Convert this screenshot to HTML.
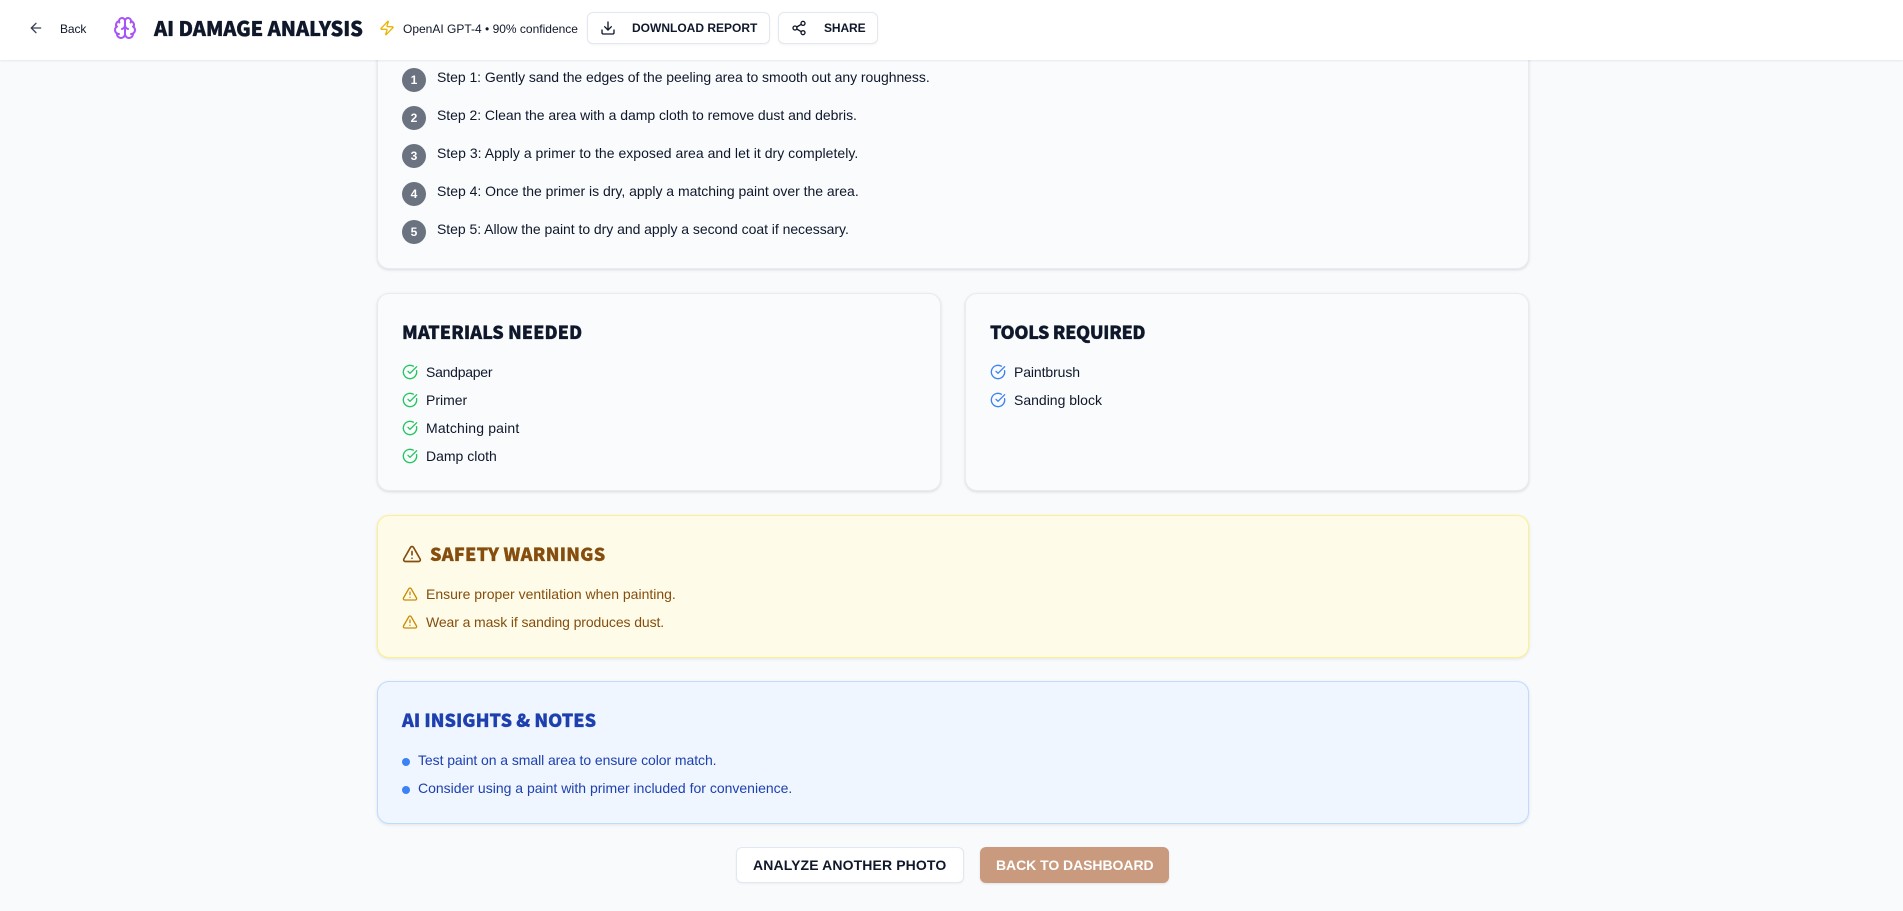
<!DOCTYPE html>
<html><head><meta charset="utf-8">
<style>
html,body{margin:0;padding:0;width:1903px;height:911px;overflow:hidden;background:#f8fafc;}
body{position:relative;font-family:"Liberation Sans","Noto Sans CJK JP",sans-serif;color:#0f172a;font-size:14px;}
.a{position:absolute;}
.t{position:absolute;white-space:nowrap;line-height:20px;height:20px;font-size:14px;}
.h{position:absolute;white-space:nowrap;line-height:24px;height:24px;font-size:18px;font-weight:900;font-family:"Noto Sans CJK JP","Liberation Sans",sans-serif;-webkit-text-stroke:.35px currentColor;}
.card{position:absolute;box-sizing:border-box;border:1px solid #e8ecf2;border-radius:12px;background:#f9fbfd;box-shadow:0 1px 3px rgba(15,23,42,.1),0 1px 2px rgba(15,23,42,.04);}
.hdr{position:absolute;left:0;top:0;width:1903px;height:60px;background:#fff;box-shadow:0 1px 2px rgba(15,23,42,.08);z-index:5;}
.btn{position:absolute;box-sizing:border-box;border:1px solid #e2e8f0;border-radius:6px;background:#fff;box-shadow:0 1px 2px rgba(15,23,42,.05);}
.b{font-weight:700;}
svg{position:absolute;fill:none;stroke-linecap:round;stroke-linejoin:round;stroke-width:2;}
.num{position:absolute;left:402px;width:24px;height:24px;border-radius:50%;background:#6b7280;color:#fff;font-weight:700;font-size:12px;line-height:24px;text-align:center;}
.dot{position:absolute;left:402px;width:8px;height:8px;border-radius:50%;background:#3b82f6;}
</style></head><body>
<svg width="0" height="0" style="position:absolute"><defs>
<symbol id="check" viewBox="0 0 24 24"><path d="M21.801 10A10 10 0 1 1 17 3.335"/><path d="m9 11 3 3L22 4"/></symbol>
<symbol id="warn" viewBox="0 0 24 24"><path d="m21.73 18-8-14a2 2 0 0 0-3.48 0l-8 14A2 2 0 0 0 4 21h16a2 2 0 0 0 1.73-3"/><path d="M12 9v4"/><path d="M12 17h.01"/></symbol>
</defs></svg>

<div class="card" style="left:377px;top:20px;width:1152px;height:249px;"></div>
<div class="num" style="top:68px;">1</div>
<div class="t" style="left:437px;top:67px;letter-spacing:-.05px;">Step 1: Gently sand the edges of the peeling area to smooth out any roughness.</div>
<div class="num" style="top:106px;">2</div>
<div class="t" style="left:437px;top:105px;letter-spacing:-.04px;">Step 2: Clean the area with a damp cloth to remove dust and debris.</div>
<div class="num" style="top:144px;">3</div>
<div class="t" style="left:437px;top:143px;letter-spacing:.03px;">Step 3: Apply a primer to the exposed area and let it dry completely.</div>
<div class="num" style="top:182px;">4</div>
<div class="t" style="left:437px;top:181px;letter-spacing:-.02px;">Step 4: Once the primer is dry, apply a matching paint over the area.</div>
<div class="num" style="top:220px;">5</div>
<div class="t" style="left:437px;top:219px;letter-spacing:-.04px;">Step 5: Allow the paint to dry and apply a second coat if necessary.</div>

<div class="card" style="left:377px;top:293px;width:564px;height:198px;"></div>
<div class="h" style="left:402px;top:320px;letter-spacing:.03px;">MATERIALS NEEDED</div>
<svg style="left:402px;top:364px;stroke:#22c55e" width="16" height="16"><use href="#check"/></svg>
<div class="t" style="left:426px;top:362px;letter-spacing:-.25px;">Sandpaper</div>
<svg style="left:402px;top:392px;stroke:#22c55e" width="16" height="16"><use href="#check"/></svg>
<div class="t" style="left:426px;top:390px;">Primer</div>
<svg style="left:402px;top:420px;stroke:#22c55e" width="16" height="16"><use href="#check"/></svg>
<div class="t" style="left:426px;top:418px;letter-spacing:.17px;">Matching paint</div>
<svg style="left:402px;top:448px;stroke:#22c55e" width="16" height="16"><use href="#check"/></svg>
<div class="t" style="left:426px;top:446px;">Damp cloth</div>

<div class="card" style="left:965px;top:293px;width:564px;height:198px;"></div>
<div class="h" style="left:990px;top:320px;letter-spacing:-.38px;">TOOLS REQUIRED</div>
<svg style="left:990px;top:364px;stroke:#3b82f6" width="16" height="16"><use href="#check"/></svg>
<div class="t" style="left:1014px;top:362px;letter-spacing:-.1px;">Paintbrush</div>
<svg style="left:990px;top:392px;stroke:#3b82f6" width="16" height="16"><use href="#check"/></svg>
<div class="t" style="left:1014px;top:390px;">Sanding block</div>

<div class="card" style="left:377px;top:515px;width:1152px;height:143px;background:#fefce8;border-color:#fef08a;box-shadow:0 1px 3px rgba(15,23,42,.1);"></div>
<svg style="left:402px;top:544px;stroke:#854d0e" width="20" height="20"><use href="#warn"/></svg>
<div class="h" style="left:430px;top:542px;color:#854d0e;letter-spacing:.25px;">SAFETY WARNINGS</div>
<svg style="left:402px;top:586px;stroke:#ca8a04" width="16" height="16"><use href="#warn"/></svg>
<div class="t" style="left:426px;top:584px;color:#854d0e;">Ensure proper ventilation when painting.</div>
<svg style="left:402px;top:614px;stroke:#ca8a04" width="16" height="16"><use href="#warn"/></svg>
<div class="t" style="left:426px;top:612px;color:#854d0e;letter-spacing:-.1px;">Wear a mask if sanding produces dust.</div>

<div class="card" style="left:377px;top:681px;width:1152px;height:143px;background:#eff6ff;border-color:#bfdbfe;box-shadow:0 1px 3px rgba(15,23,42,.1);"></div>
<div class="h" style="left:402px;top:708px;color:#1e40af;letter-spacing:.03px;">AI INSIGHTS &amp; NOTES</div>
<div class="dot" style="top:758px;"></div>
<div class="t" style="left:418px;top:750px;color:#1e40af;letter-spacing:-.07px;">Test paint on a small area to ensure color match.</div>
<div class="dot" style="top:786px;"></div>
<div class="t" style="left:418px;top:778px;color:#1e40af;">Consider using a paint with primer included for convenience.</div>

<div class="btn" style="left:736px;top:847px;width:228px;height:36px;"></div>
<div class="t b" style="left:753px;top:855px;letter-spacing:.12px;">ANALYZE ANOTHER PHOTO</div>
<div class="a" style="left:980px;top:847px;width:189px;height:36px;background:#c99a7e;border-radius:6px;box-shadow:0 1px 2px rgba(15,23,42,.1);"></div>
<div class="t b" style="left:996px;top:855px;color:#fff;letter-spacing:-.05px;">BACK TO DASHBOARD</div>

<div class="hdr">
<svg style="left:28px;top:20px;stroke:#374151" width="16" height="16" viewBox="0 0 24 24"><path d="m12 19-7-7 7-7"/><path d="M19 12H5"/></svg>
<div class="t" style="left:60px;top:18.5px;font-size:12px;letter-spacing:-.1px;">Back</div>
<svg style="left:113px;top:16px;stroke:#a855f7" width="24" height="24" viewBox="0 0 24 24"><path d="M12 5a3 3 0 1 0-5.997.125 4 4 0 0 0-2.526 5.77 4 4 0 0 0 .556 6.588A4 4 0 1 0 12 18Z"/><path d="M12 5a3 3 0 1 1 5.997.125 4 4 0 0 1 2.526 5.77 4 4 0 0 1-.556 6.588A4 4 0 1 1 12 18Z"/><path d="M15 13a4.5 4.5 0 0 1-3-4 4.5 4.5 0 0 1-3 4"/><path d="M17.599 6.5a3 3 0 0 0 .399-1.375"/><path d="M6.003 5.125A3 3 0 0 0 6.401 6.5"/><path d="M3.477 10.896a4 4 0 0 1 .585-.396"/><path d="M19.938 10.5a4 4 0 0 1 .585.396"/><path d="M6 18a4 4 0 0 1-1.967-.516"/><path d="M19.967 17.484A4 4 0 0 1 18 18"/></svg>
<div class="h" style="left:154px;top:16px;font-size:20px;letter-spacing:-.1px;">AI DAMAGE ANALYSIS</div>
<svg style="left:379px;top:20px;stroke:#eab308" width="16" height="16" viewBox="0 0 24 24"><path d="M4 14a1 1 0 0 1-.78-1.63l9.9-10.2a.5.5 0 0 1 .86.46l-1.92 6.02A1 1 0 0 0 13 10h7a1 1 0 0 1 .78 1.63l-9.9 10.2a.5.5 0 0 1-.86-.46l1.92-6.02A1 1 0 0 0 11 14z"/></svg>
<div class="t" style="left:403px;top:18.5px;font-size:12px;">OpenAI GPT-4 • 90% confidence</div>
<div class="btn" style="left:587px;top:12px;width:183px;height:32px;"></div>
<svg style="left:600px;top:20px;stroke:#0f172a" width="16" height="16" viewBox="0 0 24 24"><path d="M21 15v4a2 2 0 0 1-2 2H5a2 2 0 0 1-2-2v-4"/><path d="M7 10l5 5 5-5"/><path d="M12 15V3"/></svg>
<div class="t b" style="left:632px;top:18px;font-size:12px;">DOWNLOAD REPORT</div>
<div class="btn" style="left:778px;top:12px;width:100px;height:32px;"></div>
<svg style="left:791px;top:20px;stroke:#0f172a" width="16" height="16" viewBox="0 0 24 24"><circle cx="18" cy="5" r="3"/><circle cx="6" cy="12" r="3"/><circle cx="18" cy="19" r="3"/><path d="M8.59 13.51l6.83 3.98"/><path d="M15.41 6.51l-6.82 3.98"/></svg>
<div class="t b" style="left:824px;top:18px;font-size:12px;letter-spacing:-.1px;">SHARE</div>
</div>
</body></html>
